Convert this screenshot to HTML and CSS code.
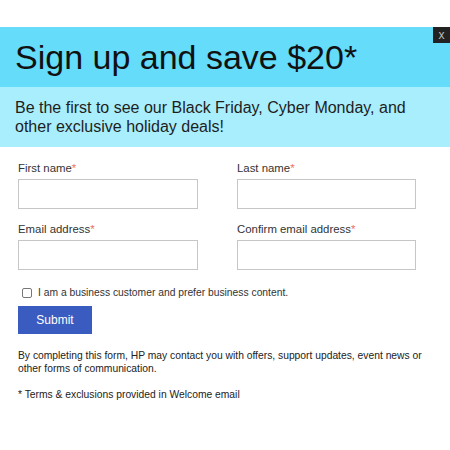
FILE: index.html
```html
<!DOCTYPE html>
<html lang="en">
<head>
<meta charset="utf-8">
<title>Sign up and save</title>
<link rel="stylesheet" href="styles.css">
</head>
<body>
<div class="modal">
  <button class="close" type="button" aria-label="Close">x</button>
  <h1 class="title">Sign up and save $20*</h1>
  <p class="sub">Be the first to see our Black Friday, Cyber Monday, and other exclusive holiday deals!</p>
  <form class="form">
    <div class="grid">
      <div class="field">
        <label class="label">First name<span class="req">*</span></label>
        <input class="input" type="text">
      </div>
      <div class="field">
        <label class="label">Last name<span class="req">*</span></label>
        <input class="input" type="text">
      </div>
      <div class="field">
        <label class="label">Email address<span class="req">*</span></label>
        <input class="input" type="email">
      </div>
      <div class="field">
        <label class="label">Confirm email address<span class="req">*</span></label>
        <input class="input" type="email">
      </div>
    </div>
    <label class="check"><input class="box" type="checkbox"><span>I am a business customer and prefer business content.</span></label>
    <button class="submit" type="button">Submit</button>
    <p class="legal">By completing this form, HP may contact you with offers, support updates, event news or other forms of communication.</p>
    <p class="terms">* Terms &amp; exclusions provided in Welcome email</p>
  </form>
</div>
</body>
</html>
```

FILE: styles.css
```css
html, body {
  margin: 0;
  padding: 0;
  background: #fff;
}
body {
  font-family: "Liberation Sans", Arial, sans-serif;
  color: #222;
}
.modal {
  position: relative;
  margin-top: 27px;
}
.close {
  position: absolute;
  top: 0;
  right: 0;
  width: 17px;
  height: 16px;
  padding: 0;
  border: 0;
  background: #222;
  color: #bdbdbd;
  font-family: "Liberation Sans", Arial, sans-serif;
  font-size: 12px;
  line-height: 14px;
  text-align: center;
}
.title {
  margin: 0;
  height: 60px;
  display: flex;
  align-items: center;
  padding: 0 15px;
  background: #64dcfa;
  color: #111;
  font-size: 34px;
  font-weight: normal;
}
.sub {
  margin: 0;
  height: 60px;
  box-sizing: border-box;
  padding: 11px 15px;
  background: #a9eefc;
  color: #1e1e1e;
  font-size: 16px;
  line-height: 19px;
}
.form {
  padding: 14px 18px 0 18px;
}
.grid {
  display: grid;
  grid-template-columns: 180px 179px;
  column-gap: 39px;
  row-gap: 13px;
}
.field {
  display: flex;
  flex-direction: column;
}
.label {
  font-size: 11.4px;
  line-height: 15px;
  color: #333;
  margin-bottom: 3px;
}
.req {
  color: #ec7264;
}
.input {
  box-sizing: border-box;
  width: 100%;
  height: 30px;
  margin: 0;
  border: 1px solid #c6c6c6;
  border-radius: 0;
  background: #fff;
}
.check {
  display: flex;
  align-items: center;
  gap: 6px;
  margin-top: 16px;
  margin-left: 4px;
  height: 13px;
  font-size: 10.3px;
  color: #333;
}
.box {
  appearance: none;
  -webkit-appearance: none;
  box-sizing: border-box;
  width: 10px;
  height: 10px;
  margin: 0;
  border: 1px solid #777;
  border-radius: 2px;
  background: #fff;
}
.submit {
  display: block;
  margin-top: 7px;
  width: 74px;
  height: 28px;
  padding: 0;
  border: 0;
  background: #3a5bc0;
  color: #fff;
  font-family: "Liberation Sans", Arial, sans-serif;
  font-size: 12px;
}
.legal {
  margin: 15px 0 0 0;
  font-size: 10.3px;
  line-height: 13px;
  color: #222;
}
.terms {
  margin: 13px 0 0 0;
  font-size: 10.3px;
  line-height: 13px;
  color: #222;
}
```
